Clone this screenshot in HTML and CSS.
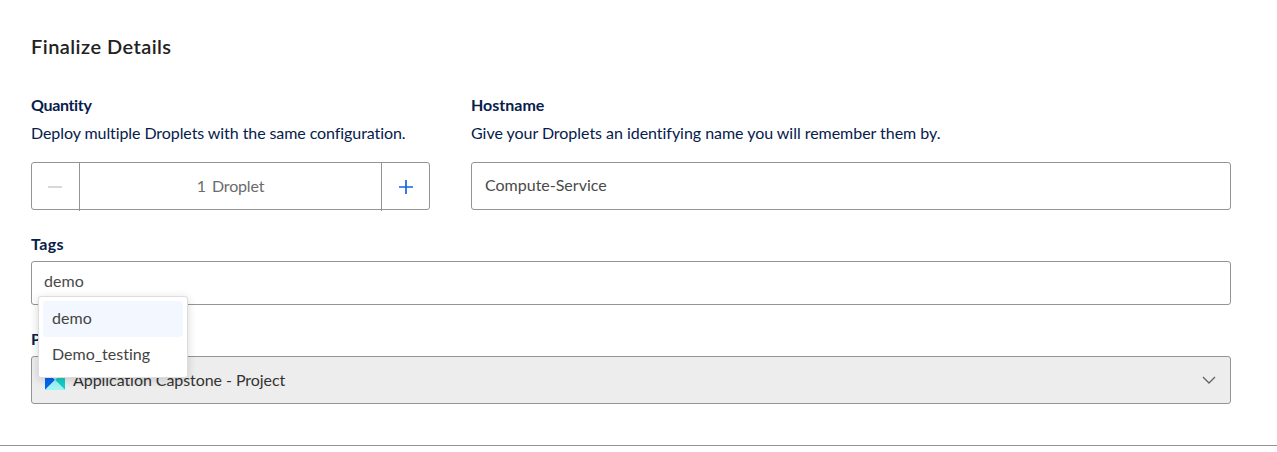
FILE: index.html
```html
<!DOCTYPE html>
<html lang="en">
<head>
<meta charset="utf-8">
<title>Finalize Details</title>
<link rel="stylesheet" href="styles.css">
</head>
<body>
<section class="finalize">
  <h2 class="title">Finalize Details</h2>
  <div class="row">
    <div class="field quantity">
      <h3 class="label t-quantity">Quantity</h3>
      <p class="hint t-deploy">Deploy multiple Droplets with the same configuration.</p>
      <div class="stepper">
        <button class="step minus" aria-label="Decrease"><svg width="16" height="16" viewBox="0 0 16 16"><path d="M1 8h14" stroke="#cfcfcf" stroke-width="1.6"/></svg></button>
        <div class="count"><span>1</span><span class="t-droplet">Droplet</span></div>
        <button class="step" aria-label="Increase"><svg width="16" height="16" viewBox="0 0 16 16"><path d="M1 8h14M8 1v14" stroke="#1763e6" stroke-width="1.7"/></svg></button>
      </div>
    </div>
    <div class="field hostname">
      <h3 class="label">Hostname</h3>
      <p class="hint t-give">Give your Droplets an identifying name you will remember them by.</p>
      <div class="input">Compute-Service</div>
    </div>
  </div>
  <div class="tags">
    <h3 class="label t-tags">Tags</h3>
    <div class="tag-input t-demo">demo</div>
    <div class="menu">
      <div class="item active t-demo">demo</div>
      <div class="item">Demo_testing</div>
    </div>
  </div>
  <div class="project">
    <h3 class="label">Project</h3>
    <div class="select">
      <svg class="avatar" width="20" height="20" viewBox="0 0 20 20"><path d="M0 0h20L10 10z" fill="#a5f3ee"/><path d="M0 0l10 10L0 20z" fill="#0565f2"/><path d="M20 0v20L10 10z" fill="#13cfc5"/><path d="M0 20L10 10l10 10z" fill="#9ff5f3"/></svg>
      <span class="t-app">Application Capstone - Project</span>
      <svg class="chevron" width="14" height="8" viewBox="0 0 14 8"><path d="M1 1l6 6 6-6" fill="none" stroke="#666" stroke-width="1.4"/></svg>
    </div>
  </div>
</section>
</body>
</html>
```
FILE: styles.css
```css
* { box-sizing: border-box; }
body {
  margin: 0;
  background: #fff;
  color: #4a4a4a;
  font: 16px/24px Lato, "Open Sans", sans-serif;
  font-variant-ligatures: none;
  overflow: hidden;
}
.finalize {
  height: 446px;
  padding: 31px 46px 0 31px;
  border-bottom: 1px solid #949494;
}
.title { margin: 0; font-size: 20px; line-height: 30px; font-weight: 600; color: #222; letter-spacing: .45px; }
.row { display: flex; gap: 41px; margin-top: 32px; }
.quantity { width: 399px; }
.hostname { flex: 1; }
.label { margin: 0; font-size: 16px; line-height: 24px; font-weight: 700; color: #06204b; }
.hint { margin: 4px 0 17px; color: #06204b; white-space: nowrap; }
.t-quantity { letter-spacing: -.35px; }
.t-tags { letter-spacing: .4px; }
.t-deploy { letter-spacing: -.08px; }
.t-give { letter-spacing: -.035px; }
.t-droplet { letter-spacing: -.15px; }
.t-demo { letter-spacing: .1px; }
.t-app { letter-spacing: -.06px; }
.stepper, .input, .tag-input, .select {
  display: flex;
  align-items: center;
  border: 1px solid #949494;
  border-radius: 3px;
}
.stepper { height: 48px; align-items: stretch; }
.step {
  display: flex;
  align-items: center;
  justify-content: center;
  width: 47px;
  padding: 2px 0 0;
  border: 0;
  background: none;
}
.minus { padding-right: 2px; }
.count {
  display: flex;
  flex: 1;
  align-items: center;
  justify-content: center;
  gap: 6px;
  height: 48px;
  padding-bottom: 2px;
  border: solid #949494;
  border-width: 0 1px;
  color: #6b6b6b;
}
.input { height: 48px; padding: 0 13px 2px; }
.tags { position: relative; margin-top: 22px; }
.tag-input { height: 44px; margin-top: 5px; padding: 0 12px 4px; }
.menu {
  position: absolute;
  z-index: 1;
  top: 64px;
  left: 7px;
  width: 150px;
  height: 82px;
  padding: 4px;
  border: 1px solid #ddd;
  border-radius: 3px;
  background: #fff;
  box-shadow: 0 2px 8px rgba(0, 0, 0, .16);
}
.item { height: 36px; padding: 5px 9px 7px; border-radius: 3px; color: #444; }
.active { background: #f3f7ff; }
.project { margin-top: 22px; }
.select { height: 48px; margin-top: 5px; padding: 0 14px 0 13px; background: #ededed; color: #333; }
.avatar { margin-right: 8px; }
.chevron { margin-left: auto; }
```
